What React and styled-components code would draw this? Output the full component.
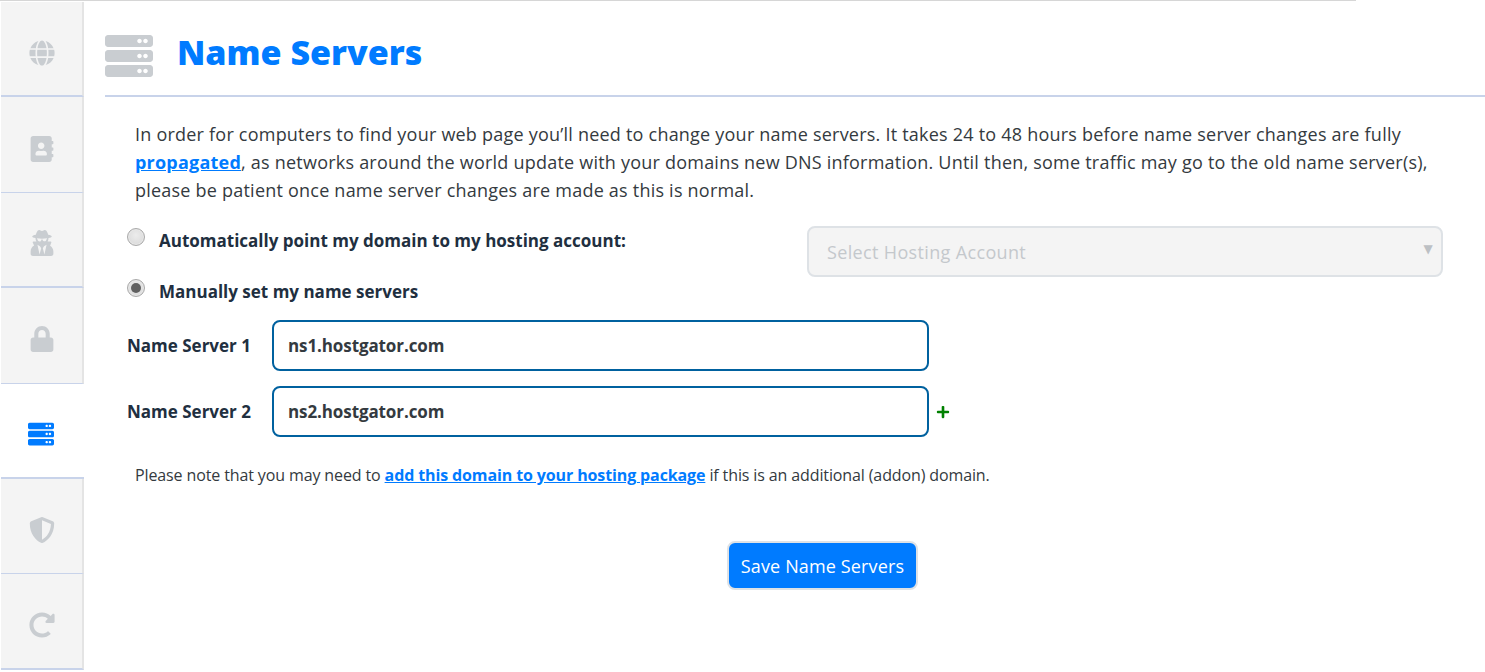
import React from 'react';
import styled, { createGlobalStyle } from 'styled-components';
import { FaGlobe, FaAddressBook, FaUserSecret, FaLock, FaServer, FaShieldAlt, FaRedoAlt, FaPlus } from 'react-icons/fa';

const Global = createGlobalStyle`
  html, body { margin: 0; padding: 0; background: #fff; }
  body { font-family: "Open Sans", "Noto Sans", sans-serif; color: #343a40; overflow: hidden; }
  * { box-sizing: border-box; }
`;
const Page = styled.div`
  width: 1485px; height: 672px; display: flex; flex-direction: column; overflow: hidden;
`;
const TopRule = styled.div`
  width: 1356px; height: 1px; background: #d6d6d6; flex: none;
`;
const Body = styled.div`
  display: flex; flex: 1; min-height: 0;
`;
const Sidebar = styled.nav`
  width: 84px; flex: none; padding: 1px 0 0 1px; display: flex; flex-direction: column;
`;
const Tab = styled.div`
  height: 95.4px; flex: none; display: flex; align-items: center; justify-content: center;
  background: ${p => (p.$active ? '#fff' : '#f4f4f4')};
  border-right: ${p => (p.$active ? '0' : '2px solid #e4e4e4')};
  border-bottom: ${p => (p.$thin ? '1px' : '2px')} solid #c8d3ea;
  color: ${p => (p.$active ? '#007bff' : '#c9cdd1')};
  font-size: 26px;
  padding-top: 8px;
  padding-right: ${p => (p.$active ? '3px' : '0')};
`;
const Main = styled.main`
  flex: 1; min-width: 0; padding-left: 21px; display: flex; flex-direction: column;
`;
const Header = styled.header`
  height: 96px; flex: none; display: flex; align-items: center; gap: 25px;
  border-bottom: 2px solid #c8d3ea; padding-top: 9px; color: #c9cdd1;
`;
const HeaderIcon = styled(FaServer)`
  margin-top: 6px;
`;
const Title = styled.h1`
  margin: -2px 0 0 -1px; font-size: 34px; line-height: 40px; font-weight: 800; color: #007bff;
`;
const Content = styled.div`
  flex: 1; display: flex; flex-direction: column;
`;
const Intro = styled.p`
  margin: 23px 50px 0 30px; font-size: 18px; line-height: 28px; color: #343a40; letter-spacing: 0.22px;
`;
const TextLink = styled.a`
  color: #007bff; font-weight: 700; text-decoration: underline;
`;
const ChoiceRow = styled.div`
  display: flex; align-items: flex-start; margin-left: 22px; height: ${p => p.$h}px;
`;
const Radio = styled.span`
  width: 18px; height: 18px; border-radius: 50%; flex: none; margin-right: 14px; margin-top: ${p => p.$top}px;
  border: 1px solid #a9a9a9; background: radial-gradient(circle at 50% 40%, #ececec, #d6d6d6);
  display: flex; align-items: center; justify-content: center;
  box-shadow: inset 0 0 0 1px #e8e8e8;
`;
const RadioDot = styled.span`
  width: 10px; height: 10px; border-radius: 50%; background: #606060;
`;
const ChoiceLabel = styled.label`
  font-size: 17px; font-weight: 700; line-height: 24px; color: #212f3f; margin-top: ${p => p.$top}px;
`;
const SelectBox = styled.div`
  position: relative; margin: 22px 42px 0 auto; width: 636px; height: 51px; flex: none;
  border: 2px solid #dee2e6; border-radius: 8px;
  background: #f4f4f4; color: #c4c8cc; font-size: 18px; display: flex; align-items: center; padding: 0 18px;
  letter-spacing: 0.35px;
`;
const Caret = styled.span`
  position: absolute; right: 8px; top: 14px; font-size: 12px; color: #bcc0c4; font-family: "DejaVu Sans", sans-serif;
`;
const ServerRow = styled.div`
  display: flex; align-items: center; margin-left: 22px; height: 51px; margin-bottom: 15px;
`;
const ServerLabel = styled.label`
  width: 145px; flex: none; font-size: 17px; font-weight: 700; color: #212f3f;
`;
const ServerInput = styled.input`
  width: 657px; height: 51px; border: 2px solid #00619f; border-radius: 8px; background: #fff; padding: 0 14px;
  font: 700 17px "Open Sans", sans-serif; color: #343a40; outline: none; letter-spacing: -0.1px;
`;
const AddIcon = styled.span`
  color: #008000; font-size: 14px; margin-left: 7px; display: flex;
`;
const Note = styled.p`
  margin: 11px 0 0 30px; font-size: 16px; line-height: 24px; color: #343a40; letter-spacing: -0.12px;
`;
const Actions = styled.div`
  margin: 54px 0 0 622px;
`;
const SaveButton = styled.button`
  width: 191px; height: 49px; background: #007bff; color: #fff; border: 2px solid #dee2e6; border-radius: 8px;
  font: 400 18px "Open Sans", sans-serif; letter-spacing: 0.14px; padding: 0;
`;

const tabs = [
  { Icon: FaGlobe },
  { Icon: FaAddressBook, thin: true },
  { Icon: FaUserSecret },
  { Icon: FaLock, thin: true },
  { Icon: FaServer, active: true },
  { Icon: FaShieldAlt, thin: true },
  { Icon: FaRedoAlt },
];

export default function App() {
  return (
    <Page>
      <Global />
      <TopRule />
      <Body>
        <Sidebar>
          {tabs.map(({ Icon, active, thin }, i) => (
            <Tab key={i} $active={active} $thin={thin}><Icon /></Tab>
          ))}
        </Sidebar>
        <Main>
          <Header>
            <HeaderIcon size={48} />
            <Title>Name Servers</Title>
          </Header>
          <Content>
            <Intro>
              In order for computers to find your web page you’ll need to change your name servers. It takes 24 to 48 hours before name server changes are fully{' '}
              <TextLink>propagated</TextLink>, as networks around the world update with your domains new DNS information. Until then, some traffic may go to the old name server(s), please be patient once name server changes are made as this is normal.
            </Intro>
            <ChoiceRow $h={66}>
              <Radio $top={24} />
              <ChoiceLabel $top={25}>Automatically point my domain to my hosting account:</ChoiceLabel>
              <SelectBox>Select Hosting Account<Caret>▼</Caret></SelectBox>
            </ChoiceRow>
            <ChoiceRow $h={50}>
              <Radio $top={9}><RadioDot /></Radio>
              <ChoiceLabel $top={10}>Manually set my name servers</ChoiceLabel>
            </ChoiceRow>
            <ServerRow>
              <ServerLabel>Name Server 1</ServerLabel>
              <ServerInput readOnly value="ns1.hostgator.com" />
            </ServerRow>
            <ServerRow>
              <ServerLabel>Name Server 2</ServerLabel>
              <ServerInput readOnly value="ns2.hostgator.com" />
              <AddIcon><FaPlus /></AddIcon>
            </ServerRow>
            <Note>
              Please note that you may need to <TextLink>add this domain to your hosting package</TextLink> if this is an additional (addon) domain.
            </Note>
            <Actions><SaveButton>Save Name Servers</SaveButton></Actions>
          </Content>
        </Main>
      </Body>
    </Page>
  );
}
